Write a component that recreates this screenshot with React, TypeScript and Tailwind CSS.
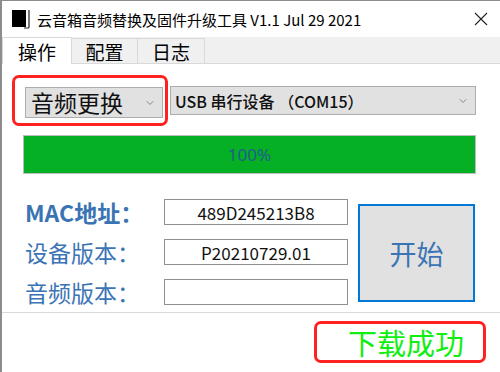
import { ChevronDown } from 'lucide-react'

const cjk = "font-['Noto_Sans_CJK_SC',sans-serif]"

function Combo({ text, className, textClass }: { text: string; className: string; textClass: string }) {
  return (
    <div className={`flex items-center bg-[#e1e1e1] border border-[#adadad] ${className}`}>
      <span className={`leading-none text-[#111] whitespace-nowrap ${textClass}`}>{text}</span>
      <ChevronDown className="ml-auto mr-[6px] text-[#6b6b6b]" size={12} strokeWidth={1.5} />
    </div>
  )
}

function Field({ label, value, bold }: { label: string; value: string; bold?: boolean }) {
  return (
    <div className="flex items-center h-[26px]">
      <span
        className={`w-[139px] text-[23px] leading-none text-[#3b74b4] whitespace-nowrap ${bold ? 'font-bold' : 'font-normal'}`}
      >
        {label}
      </span>
      <div className="w-[184px] h-[26px] border border-[#8f8f8f] bg-white flex items-center justify-center">
        <span className="text-[17px] leading-none text-[#111] font-['Noto_Sans_CJK_SC',sans-serif]">{value}</span>
      </div>
    </div>
  )
}

export default function App() {
  return (
    <div className={`w-[500px] h-[372px] bg-white border-l-2 border-t border-[#8c8c8c] flex flex-col overflow-hidden ${cjk}`}>
      {/* Title bar */}
      <div className="h-[36px] shrink-0 flex items-center">
        <svg className="ml-[9px]" width="22" height="22" viewBox="0 0 22 22">
          <rect x="1" y="2" width="14" height="17" fill="#000" />
          <path d="M18 2 V19 Q18 20 17 20 H13" fill="none" stroke="#222" strokeWidth="1.2" />
        </svg>
        <span className="ml-[4px] text-[15px] leading-none text-black whitespace-nowrap">
          云音箱音频替换及固件升级工具 V1.1 Jul 29 2021
        </span>
        <svg className="ml-auto mr-[12px]" width="14" height="14" viewBox="0 0 14 14">
          <path d="M1 1 L13 13 M13 1 L1 13" stroke="#222" strokeWidth="1.1" />
        </svg>
      </div>

      {/* Tabs */}
      <div className="h-[27px] shrink-0 bg-[#f0f0f0] border-b border-[#d9d9d9] flex items-end">
        <div className="w-[70px] h-[27px] -mb-px bg-white border border-b-0 border-[#d9d9d9] flex items-center justify-center text-[19px] leading-none text-black">
          操作
        </div>
        <div className="w-[66px] h-[25px] border-t border-r border-[#d9d9d9] flex items-center justify-center text-[19px] leading-none text-black">
          配置
        </div>
        <div className="w-[67px] h-[25px] border-t border-r border-[#d9d9d9] flex items-center justify-center text-[19px] leading-none text-black">
          日志
        </div>
      </div>

      {/* Tab page */}
      <div className="h-[249px] shrink-0 border-b border-[#d9d9d9] flex flex-col">
        <div className="flex items-start pt-[11px]">
          <div className="ml-[10px] w-[156px] h-[51px] border-[3px] border-[#ff2020] rounded-[7px] pl-[10px] pt-[9px]">
            <Combo text="音频更换" className="w-[138px] h-[31px] pl-[5px]" textClass="text-[23px]" />
          </div>
          <Combo
            text="USB 串行设备 （COM15）"
            className="ml-[2px] mt-[11px] w-[306px] h-[29px] pl-[4px]"
            textClass="text-[16px] font-medium"
          />
        </div>

        <div className="ml-[21px] mt-[9px] w-[453px] h-[39px] bg-[#06b025] border border-[#bcbcbc] flex items-center justify-center">
          <span className="text-[17px] leading-none text-[#1f5e8c] font-['Noto_Sans',sans-serif]">100%</span>
        </div>

        <div className="flex items-start ml-[23px] mt-[25px]">
          <div className="flex flex-col gap-[14px]">
            <Field label="MAC地址：" value="489D245213B8" bold />
            <Field label="设备版本：" value="P20210729.01" />
            <Field label="音频版本：" value="" />
          </div>
          <div className="ml-[10px] mt-[5px] w-[117px] h-[98px] bg-[#e1e1e1] border-2 border-[#0078d7] flex items-center justify-center">
            <span className="text-[27px] leading-none text-[#3b74b4]">开始</span>
          </div>
        </div>
      </div>

      {/* Status */}
      <div className="flex justify-end pt-[8px] pr-[14px]">
        <div className="w-[172px] h-[42px] border-[3px] border-[#ff2020] rounded-[7px] flex items-center pl-[31px]">
          <span className="text-[29px] leading-none text-[#11ee11] whitespace-nowrap">下载成功</span>
        </div>
      </div>
    </div>
  )
}
